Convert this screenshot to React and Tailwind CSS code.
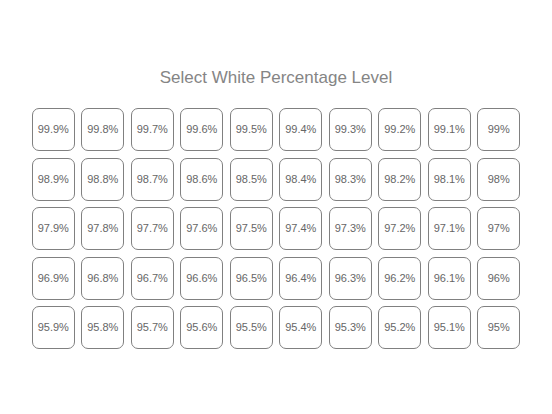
const rows = [99, 98, 97, 96, 95];

function label(base, i) {
  const tenth = 9 - i;
  return tenth === 0 ? `${base}%` : `${base}.${tenth}%`;
}

export default function App() {
  return (
    <div className="flex h-[414px] w-[552px] flex-col items-center bg-white pt-[67px] font-['Liberation_Sans',Arial,sans-serif]">
      <h1 className="text-[17px] leading-[22px] text-[#858585]">Select White Percentage Level</h1>
      <div className="mt-[19px] grid grid-cols-[repeat(10,43px)] gap-[6.5px]">
        {rows.map((base) =>
          Array.from({ length: 10 }, (_, i) => (
            <button
              key={`${base}-${i}`}
              className="flex h-[43px] w-[43px] items-center justify-center rounded-[7px] border border-[#808080] bg-white text-[11px] text-[#666]"
            >
              {label(base, i)}
            </button>
          ))
        )}
      </div>
    </div>
  );
}
